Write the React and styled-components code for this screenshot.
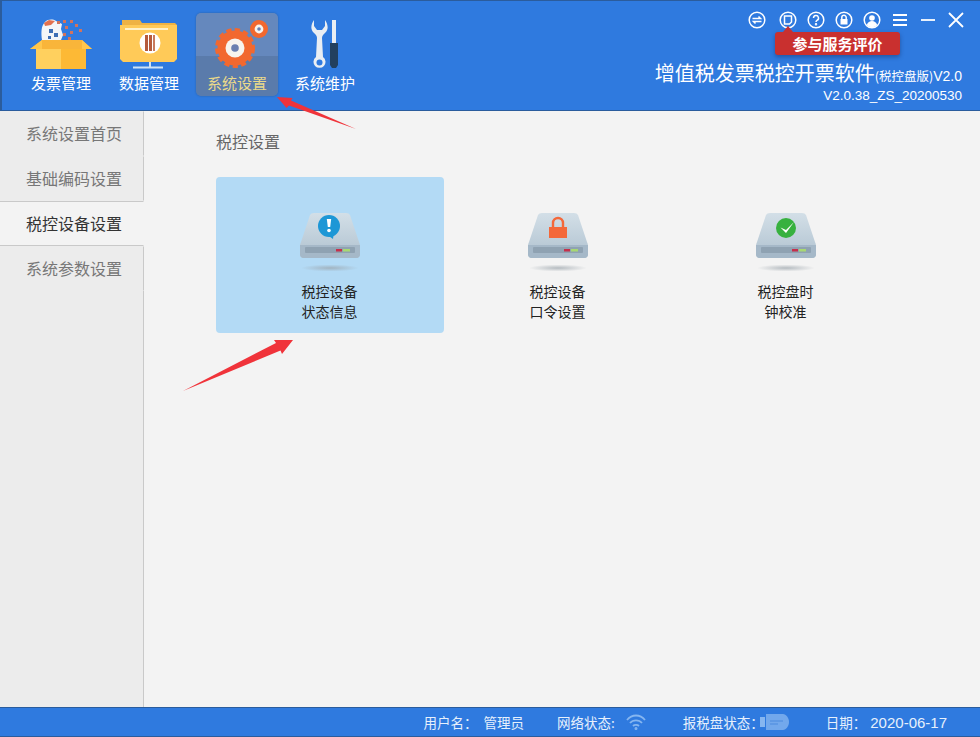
import React from "react"
import styled, { createGlobalStyle } from "styled-components"

const FONT = `"Noto Sans CJK SC", "Noto Sans", sans-serif`

const GlobalStyle = createGlobalStyle`
  html, body {
    margin: 0;
    padding: 0;
    background: #f3f3f3;
  }
  * {
    box-sizing: border-box;
  }
`

const navData = [
  { title: "发票管理", icon: <BoxIcon /> },
  { title: "数据管理", icon: <FolderIcon /> },
  { title: "系统设置", icon: <GearIcon />, active: true },
  { title: "系统维护", icon: <ToolIcon /> },
]

const sideData = ["系统设置首页", "基础编码设置", "税控设备设置", "系统参数设置"]

const cardData = [
  { lines: ["税控设备", "状态信息"], badge: <InfoBadge />, active: true },
  { lines: ["税控设备", "口令设置"], badge: <LockBadge /> },
  { lines: ["税控盘时", "钟校准"], badge: <CheckBadge /> },
]

function BoxIcon() {
  return (
    <svg width="66" height="60" viewBox="0 0 66 60">
      <path d="M14 30c-1-7-1-14 3-18 3-3 8-3 11-1l6 3-1 5 2 6-2 5z" fill="#f4f6f8" />
      <path d="M16 13l5-3 6 1-4 4-6 1z" fill="#e2714f" />
      <g fill="#3e6fb5">
        <rect x="21" y="19" width="4" height="4" />
        <rect x="26" y="23" width="4" height="4" />
        <rect x="20" y="26" width="3" height="3" />
      </g>
      <g fill="#d1735d">
        <rect x="29" y="11" width="3" height="3" />
        <rect x="35" y="10" width="3" height="3" />
        <rect x="42" y="10" width="3" height="3" />
        <rect x="37" y="16" width="3" height="3" />
        <rect x="47" y="14" width="3" height="3" />
        <rect x="42" y="21" width="3" height="3" />
        <rect x="35" y="23" width="3" height="3" />
        <rect x="51" y="19" width="3" height="3" />
        <rect x="40" y="27" width="3" height="3" />
      </g>
      <path d="M14 30h40l10 9H2z" fill="#f9b53a" />
      <path d="M8 39h25v20H8z" fill="#ffd05e" />
      <path d="M33 39h25v20H33z" fill="#fdb935" />
      <path d="M2 39l12-9v9zM64 39l-10-9v9z" fill="#ffc64d" />
    </svg>
  )
}

function FolderIcon() {
  return (
    <svg width="60" height="54" viewBox="0 0 60 54">
      <path d="M3 4h18l2 3h33l2 2v8H3z" fill="#eeb244" />
      <path d="M1 9h57v34l-3 3H4l-3-3z" fill="#ffca58" />
      <rect x="6" y="12" width="43" height="2" fill="#fff1c9" />
      <circle cx="31" cy="27" r="10.500" fill="#fff" />
      <rect x="26" y="19" width="3" height="16" fill="#b65b3c" />
      <rect x="30" y="19" width="3" height="16" fill="#b65b3c" />
      <rect x="34" y="19" width="2" height="16" fill="#c97a5e" />
      <path d="M31 46v5M14 51.500h30" stroke="#cfe3f5" strokeWidth="2" fill="none" />
    </svg>
  )
}

function GearIcon() {
  return (
    <svg width="62" height="58" viewBox="0 0 62 58">
      <circle cx="29" cy="36" r="18" fill="none" stroke="#f2682f" strokeWidth="4" strokeDasharray="5.200 3.200" />
      <circle cx="29" cy="36" r="17.500" fill="#f2682f" />
      <circle cx="29" cy="36" r="9.500" fill="#f7f4ee" />
      <circle cx="29" cy="36" r="3.800" fill="#6a7fb0" />
      <circle cx="53" cy="17" r="9" fill="#f2682f" />
      <circle cx="53" cy="17" r="4.400" fill="#f7f4ee" />
      <circle cx="53" cy="17" r="1.800" fill="#6a7fb0" />
    </svg>
  )
}

function ToolIcon() {
  return (
    <svg width="28" height="52" viewBox="0 0 28 52">
      <path
        d="M3 2C0 6-1 12 3 15c2 2 3 3 3 5l-1 19a6 6 0 1 0 7 0l-1-19c0-2 1-3 3-5 4-3 3-9 0-13v6l-3 4H6L3 8z"
        fill="#e9eef3"
      />
      <circle cx="8.500" cy="44.500" r="3" fill="#2f7ae0" />
      <rect x="21" y="2" width="4" height="23" fill="#e9eef3" />
      <path d="M19 25h8v22l-2 3h-4l-2-3z" fill="#22405f" />
    </svg>
  )
}

function InfoBadge() {
  return (
    <g>
      <path d="M26 22l7 5 1-8z" fill="#1d97d6" />
      <circle cx="29" cy="14" r="11" fill="#1d97d6" />
      <path d="M26.800 7h4.400l-1 8h-2.400z" fill="#fff" />
      <circle cx="29" cy="18.500" r="1.800" fill="#fff" />
    </g>
  )
}

function LockBadge() {
  return (
    <g>
      <path d="M25 15v-4a5 5 0 0 1 10 0v4" fill="none" stroke="#f4683a" strokeWidth="2.400" />
      <rect x="21" y="15" width="18" height="11" fill="#f4683a" />
    </g>
  )
}

function CheckBadge() {
  return (
    <g>
      <circle cx="30" cy="16" r="10" fill="#37b13f" />
      <path d="M24.500 15.500l5.500 5.500 8-11-8 8z" fill="#fff" />
    </g>
  )
}

const DiskIcon = ({ children }) => (
  <svg width="60" height="62" viewBox="0 0 60 62">
    <defs>
      <linearGradient id="diskTop" x1="0" y1="0" x2="0" y2="1">
        <stop offset="0" stopColor="#d3dfe7" />
        <stop offset="1" stopColor="#b0c2d0" />
      </linearGradient>
      <radialGradient id="diskShadow">
        <stop offset="0" stopColor="#9aa3aa" stopOpacity="0.7" />
        <stop offset="1" stopColor="#9aa3aa" stopOpacity="0" />
      </radialGradient>
    </defs>
    <path
      d="M10 3Q11 1 14 1H46Q49 1 50 3L59 30Q60 32 60 34V42Q60 46 56 46H4Q0 46 0 42V34Q0 32 1 30Z"
      fill="url(#diskTop)"
    />
    <path d="M0 33H60V42Q60 46 56 46H4Q0 46 0 42Z" fill="#a5b8c8" />
    <rect x="5" y="35" width="50" height="6" rx="1" fill="#8fa2b2" />
    <rect x="36" y="37" width="6" height="2.500" fill="#c5304c" />
    <rect x="43" y="37" width="7" height="2.500" fill="#a8d873" />
    {children}
    <ellipse cx="30" cy="56" rx="29" ry="3.500" fill="url(#diskShadow)" />
  </svg>
)

const App = () => {
  return (
    <Page>
      <GlobalStyle />
      <Header>
        <NavMenu>
          {navData.map((item, index) => (
            <NavItem key={index} $active={item.active}>
              <NavIcon>{item.icon}</NavIcon>
              <NavLabel $active={item.active}>{item.title}</NavLabel>
            </NavItem>
          ))}
        </NavMenu>
        <HeaderRight>
          <Toolbar>
            <ToolBtn>
              <svg width="18" height="18" viewBox="0 0 18 18" fill="none" stroke="#fff" strokeWidth="1.500">
                <circle cx="9" cy="9" r="7.800" />
                <path d="M4.500 7.500h8l-2-2M13.500 10.500h-8l2 2" />
              </svg>
            </ToolBtn>
            <ToolBtn>
              <svg width="18" height="18" viewBox="0 0 18 18" fill="none" stroke="#fff" strokeWidth="1.500">
                <circle cx="9" cy="9" r="7.800" />
                <path d="M5.500 5h7v6l-2 2h-5z" />
              </svg>
            </ToolBtn>
            <ToolBtn>
              <svg width="18" height="18" viewBox="0 0 18 18" fill="none" stroke="#fff" strokeWidth="1.500">
                <circle cx="9" cy="9" r="7.800" />
                <path d="M6.500 7a2.500 2.500 0 1 1 3.500 2.300c-.7.400-1 .8-1 1.700" />
                <circle cx="9" cy="13.300" r="0.500" />
              </svg>
            </ToolBtn>
            <ToolBtn>
              <svg width="18" height="18" viewBox="0 0 18 18" fill="none" stroke="#fff" strokeWidth="1.500">
                <circle cx="9" cy="9" r="7.800" />
                <path d="M6.800 8V6.500a2.200 2.200 0 0 1 4.400 0V8" />
                <rect x="5.500" y="8" width="7" height="5.500" fill="#fff" stroke="none" />
              </svg>
            </ToolBtn>
            <ToolBtn>
              <svg width="18" height="18" viewBox="0 0 18 18" fill="none" stroke="#fff" strokeWidth="1.500">
                <circle cx="9" cy="9" r="7.800" />
                <circle cx="9" cy="7" r="2.800" fill="#fff" stroke="none" />
                <path d="M3.800 14c1-3 3-4 5.200-4s4.200 1 5.200 4a7 7 0 0 1-10.400 0z" fill="#fff" stroke="none" />
              </svg>
            </ToolBtn>
            <ToolBtn>
              <svg width="18" height="18" viewBox="0 0 18 18" fill="none" stroke="#fff" strokeWidth="1.800">
                <path d="M2 4h14M2 9h14M2 14h14" />
              </svg>
            </ToolBtn>
            <ToolBtn>
              <svg width="18" height="18" viewBox="0 0 18 18" fill="none" stroke="#fff" strokeWidth="1.800">
                <path d="M2 9h14" />
              </svg>
            </ToolBtn>
            <ToolBtn>
              <svg width="18" height="18" viewBox="0 0 18 18" fill="none" stroke="#fff" strokeWidth="1.800">
                <path d="M2 2l14 14M16 2L2 16" />
              </svg>
            </ToolBtn>
          </Toolbar>
          <Rating>参与服务评价</Rating>
          <AppTitle>
            增值税发票税控开票软件<small>(税控盘版)</small>
            <span>V2.0</span>
          </AppTitle>
          <AppVersion>V2.0.38_ZS_20200530</AppVersion>
        </HeaderRight>
      </Header>

      <Body>
        <Sidebar>
          {sideData.map((title, index) => (
            <SideItem key={index} $active={index === 2}>
              {title}
            </SideItem>
          ))}
          <SideRest />
        </Sidebar>
        <Main>
          <SectionTitle>税控设置</SectionTitle>
          <CardRow>
            {cardData.map((card, index) => (
              <Card key={index} $active={card.active}>
                <DiskIcon>{card.badge}</DiskIcon>
                <CardText>
                  {card.lines.map((line, i) => (
                    <div key={i}>{line}</div>
                  ))}
                </CardText>
              </Card>
            ))}
          </CardRow>
        </Main>
      </Body>

      <Footer>
        <FootItem $gap={33}>用户名：<FootName>管理员</FootName></FootItem>
        <FootItem $gap={37}>
          网络状态:
          <FootIcon>
            <svg width="20" height="16" viewBox="0 0 20 16" fill="none" stroke="#86b6f0" strokeWidth="1.800">
              <path d="M1 6c5-6 13-6 18 0" />
              <path d="M4 9c3-3.500 9-3.500 12 0" />
              <path d="M7 12c1.500-1.500 4.500-1.500 6 0" />
              <circle cx="10" cy="14.500" r="0.600" fill="#86b6f0" />
            </svg>
          </FootIcon>
        </FootItem>
        <FootItem $gap={36}>
          报税盘状态：
          <FootDisk>
            <svg width="30" height="18" viewBox="0 0 30 18">
              <rect x="0" y="4" width="5" height="10" fill="#86b6f0" />
              <path d="M6 1h17c3 0 6 4 6 8s-3 8-6 8H6z" fill="#72a8ec" />
              <path d="M10 8h13M10 11h8" stroke="#4a89dd" strokeWidth="1.200" />
            </svg>
          </FootDisk>
        </FootItem>
        <FootItem $gap={33}>日期：<FootDate>2020-06-17</FootDate></FootItem>
      </Footer>

      <ArrowLayer width="980" height="737" viewBox="0 0 980 737">
        <path d="M356 129L289 105.500 286.500 108 277 97 292.500 98 291 100.500z" fill="#f0333a" />
        <path d="M183 391L276 343 274 340 293 340 282 354 280.500 350.500z" fill="#f0333a" />
      </ArrowLayer>
    </Page>
  )
}

export default App

const Page = styled.div`
  position: relative;
  width: 980px;
  height: 737px;
  display: flex;
  flex-direction: column;
  overflow: hidden;
  font-family: ${FONT};
  background: #f3f3f3;
`

const Header = styled.header`
  height: 111px;
  flex-shrink: 0;
  display: flex;
  justify-content: space-between;
  background: #2f7adf;
  border-top: 1px solid #2b5c9c;
  border-bottom: 1px solid #2a5c9d;
  border-left: 2px solid #2b5c9c;
`

const NavMenu = styled.nav`
  display: flex;
  gap: 6px;
  padding: 12px 0 0 18px;
  align-items: flex-start;
`

const NavItem = styled.div`
  width: 82px;
  height: 83px;
  display: flex;
  flex-direction: column;
  align-items: center;
  border-radius: 5px;
  background: ${({ $active }) =>
    $active ? "linear-gradient(#6588bd 0 43px, #5a7bab 43px 100%)" : "transparent"};
  box-shadow: ${({ $active }) => ($active ? "0 0 2px #2a5c9d" : "none")};
`

const NavIcon = styled.div`
  height: 60px;
  display: flex;
  align-items: flex-end;
  justify-content: center;
  padding-bottom: 3px;
  flex-shrink: 0;
`

const NavLabel = styled.div`
  font-size: 15px;
  line-height: 20px;
  color: ${({ $active }) => ($active ? "#ead98a" : "#ffffff")};
`

const HeaderRight = styled.div`
  display: flex;
  flex-direction: column;
  align-items: flex-end;
  padding: 10px 18px 0 0;
  position: relative;
`

const Toolbar = styled.div`
  display: flex;
  align-items: center;
  gap: 10px;
  height: 18px;
  margin-right: -3px;
`

const ToolBtn = styled.div`
  width: 18px;
  height: 18px;
  display: flex;

  &:first-child {
    margin-right: 3px;
  }
`

const Rating = styled.div`
  position: absolute;
  top: 31px;
  right: 80px;
  width: 125px;
  height: 23px;
  border-radius: 3px;
  background: #c9302f;
  color: #fff;
  font-size: 15px;
  font-weight: 700;
  line-height: 23px;
  text-align: center;
  box-shadow: 0 2px 4px rgba(20, 40, 90, 0.45);

  &::before {
    content: "";
    position: absolute;
    left: 8px;
    top: -6px;
    border-left: 5px solid transparent;
    border-right: 5px solid transparent;
    border-bottom: 6px solid #c9302f;
  }
`

const AppTitle = styled.div`
  margin-top: 30px;
  height: 28px;
  font-size: 20px;
  line-height: 28px;
  color: #fff;
  white-space: nowrap;

  small {
    font-size: 12.5px;
  }

  span {
    font-family: "Liberation Sans", sans-serif;
    font-size: 14px;
  }
`

const AppVersion = styled.div`
  margin-top: -1px;
  font-family: "Liberation Sans", sans-serif;
  font-size: 13.5px;
  line-height: 20px;
  color: #fff;
`

const Body = styled.div`
  flex: 1;
  display: flex;
  min-height: 0;
`

const Sidebar = styled.aside`
  width: 144px;
  flex-shrink: 0;
  display: flex;
  flex-direction: column;
`

const SideItem = styled.div`
  height: 45px;
  padding-left: 26px;
  font-size: 16px;
  line-height: 42px;
  color: ${({ $active }) => ($active ? "#333333" : "#777777")};
  background: ${({ $active }) => ($active ? "#f3f3f3" : "#ececec")};
  border-right: 1px solid ${({ $active }) => ($active ? "#f3f3f3" : "#c9c9c9")};
  border-bottom: 1px solid ${({ $active }) => ($active ? "#c9c9c9" : "transparent")};
  border-top: 1px solid ${({ $active }) => ($active ? "#c9c9c9" : "transparent")};
`

const SideRest = styled.div`
  flex: 1;
  background: #ececec;
  border-right: 1px solid #c9c9c9;
`

const Main = styled.main`
  flex: 1;
  padding: 18px 0 0 72px;
`

const SectionTitle = styled.div`
  font-size: 16px;
  line-height: 24px;
  color: #666666;
`

const CardRow = styled.div`
  display: flex;
  margin-top: 24px;
`

const Card = styled.div`
  width: 228px;
  height: 156px;
  padding: 35px 1px 0 0;
  display: flex;
  flex-direction: column;
  align-items: center;
  border-radius: 4px;
  background: ${({ $active }) => ($active ? "#b3daf5" : "transparent")};
`

const CardText = styled.div`
  margin-top: 7px;
  font-size: 14px;
  line-height: 20px;
  color: #222222;
  text-align: center;
`

const Footer = styled.footer`
  height: 30px;
  flex-shrink: 0;
  display: flex;
  align-items: center;
  justify-content: flex-end;
  background: #2f7adf;
  border-top: 1px solid #2a5c9d;
  border-bottom: 1px solid #2a5c9d;
  font-size: 13.5px;
  color: #e6f0fc;
`

const FootItem = styled.div`
  display: flex;
  align-items: center;
  margin-right: ${({ $gap }) => $gap}px;
  white-space: nowrap;
`

const FootName = styled.span`
  margin-left: 6px;
`

const FootIcon = styled.span`
  display: flex;
  margin-left: 11px;
`

const FootDisk = styled.span`
  display: flex;
  margin-left: -4px;
`

const FootDate = styled.span`
  font-family: "Liberation Sans", sans-serif;
  font-size: 15px;
  margin-left: 4px;
`

const ArrowLayer = styled.svg`
  position: absolute;
  top: 0;
  left: 0;
  pointer-events: none;
`
